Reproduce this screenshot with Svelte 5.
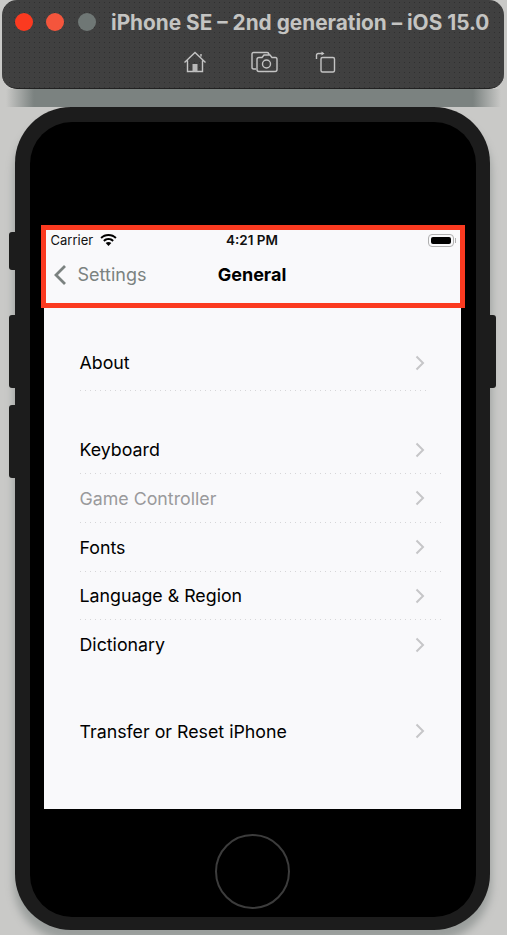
<script>
  const groups = [
    [{ label: 'About' }],
    [
      { label: 'Keyboard' },
      { label: 'Game Controller', disabled: true },
      { label: 'Fonts' },
      { label: 'Language & Region' },
      { label: 'Dictionary' }
    ],
    [{ label: 'Transfer or Reset iPhone' }]
  ];
</script>

<div class="page">
  <header class="toolbar">
    <div class="title-row">
      <span class="light red"></span>
      <span class="light red dim"></span>
      <span class="light grey"></span>
      <span class="title">iPhone SE – 2nd generation – iOS 15.0</span>
    </div>
    <div class="tools">
      <svg width="24" height="24" viewBox="0 0 24 24" fill="none" stroke="#c4c4c4" stroke-width="1.4">
        <path d="M1.5 12.5 12 2.5l10.500 10M4.500 10.500V21.500h15V10.500M18 6.500V4" />
        <rect x="9.500" y="14" width="5" height="7.500" fill="#b8b8b8" stroke="none" />
      </svg>
      <svg class="camera" width="27" height="22" viewBox="0 0 27 22" fill="none" stroke="#c4c4c4" stroke-width="1.4">
        <path d="M5 18H2.500Q1 18 1 16.500V3Q1 1.500 2.500 1.500H16Q18 1.500 18 4" />
        <path d="M6 8.500Q6 6.500 8 6.500h3l2-2.500h6l2 2.500h3.500q1.500 0 1.500 2v10q0 2-2 2H8q-2 0-2-2z" />
        <circle cx="15.500" cy="13" r="4" />
      </svg>
      <svg class="rotate" width="21" height="22" viewBox="0 0 21 22" fill="none" stroke="#c4c4c4" stroke-width="1.4">
        <rect x="6" y="6.500" width="13.500" height="14.500" rx="1.500" />
        <path d="M1.500 8V4.500Q1.500 2.500 3.500 2.500H7" />
        <path d="M6.500 0.500 9.500 2.500 6.500 4.500z" fill="#c4c4c4" stroke="none" />
      </svg>
    </div>
  </header>

  <div class="band"></div>

  <div class="phone">
    <span class="side-btn mute"></span>
    <span class="side-btn vol-up"></span>
    <span class="side-btn vol-down"></span>
    <span class="side-btn power"></span>

    <div class="bezel">
      <div class="screen">
        <div class="status-bar">
          <div class="carrier">
            <span>Carrier</span>
            <svg width="17" height="12" viewBox="0 0 17 12">
              <path d="M8.500 0C5.300 0 2.500 1.200.4 3.300l1.400 1.500C3.500 3 5.900 2 8.500 2s5 1 6.700 2.800l1.400-1.500C14.500 1.200 11.700 0 8.500 0z" />
              <path d="M8.500 4C6.400 4 4.600 4.800 3.200 6.200l1.400 1.500C5.600 6.700 7 6.100 8.500 6.100s2.900.6 3.900 1.600l1.400-1.500C12.400 4.800 10.600 4 8.500 4z" />
              <path d="M8.500 8c-1.100 0-2 .4-2.800 1.100l2.800 2.900 2.800-2.900C10.500 8.400 9.600 8 8.500 8z" />
            </svg>
          </div>
          <span class="clock">4:21 PM</span>
          <div class="battery"><span class="charge"></span></div>
        </div>

        <nav class="nav-bar">
          <div class="back">
            <svg width="14" height="22" viewBox="0 0 14 22" fill="none" stroke="#7b8280" stroke-width="2.800">
              <path d="M12 2 3 11l9 9" />
            </svg>
            <span>Settings</span>
          </div>
          <span class="nav-title">General</span>
        </nav>

        <div class="list">
          {#each groups as group}
            <ul class="group">
              {#each group as row}
                <li class="row" class:disabled={row.disabled}>
                  <span class="row-label">{row.label}</span>
                  <svg width="10" height="16" viewBox="0 0 10 16" fill="none" stroke="#c6c6c8" stroke-width="2">
                    <path d="M1.500 1.500 8 8l-6.500 6.500" />
                  </svg>
                </li>
              {/each}
            </ul>
          {/each}
        </div>

        <div class="highlight"></div>
      </div>

      <div class="home-button"></div>
    </div>
  </div>
</div>

<style>
  :global(body) {
    margin: 0;
    background: #c9c9c7;
  }

  .page {
    width: 507px;
    height: 935px;
    overflow: hidden;
    font-family: Inter, "Liberation Sans", sans-serif;
    background: #c9c9c7;
  }

  .toolbar {
    box-sizing: border-box;
    width: 502px;
    height: 89px;
    margin-left: 2px;
    padding: 13px 0 0 13px;
    background-color: #404040;
    background-image: radial-gradient(circle, #303030 0.5px, transparent 0.8px);
    background-size: 5px 5px;
    border-radius: 15px;
    border-bottom: 1px solid #222;
  }

  .band {
    height: 18px;
    background: linear-gradient(to right, #c9c9c7 6px, #7b8280 34px, #7b8280 473px, #c9c9c7 501px);
  }

  .title-row {
    display: flex;
    align-items: center;
    height: 18px;
  }

  .light {
    width: 18px;
    height: 18px;
    margin-right: 13px;
    border-radius: 50%;
  }

  .red {
    background: #fb3a20;
  }

  .red.dim {
    background: #f4553c;
    margin-right: 14px;
  }

  .grey {
    background: #6f7775;
    margin-right: 14px;
  }

  .title {
    margin-left: 1px;
    color: #c4c4c2;
    font-size: 20.800px;
    font-weight: 700;
    white-space: nowrap;
  }

  .tools {
    display: flex;
    align-items: center;
    gap: 29px;
    margin: 19px 0 0 168px;
  }

  .camera {
    margin-left: 15px;
  }

  .rotate {
    margin-left: 8px;
    margin-top: -1px;
  }

  .phone {
    position: relative;
    box-sizing: border-box;
    width: 475px;
    height: 823px;
    margin-left: 15px;
    padding: 15px 14px 13px 15px;
    background: #1c1c1c;
    border-radius: 56px;
    box-shadow: 0 10px 8px 1px #9a9e9c;
  }

  .side-btn {
    position: absolute;
    width: 6px;
    background: #1c1c1c;
    border-radius: 3px 0 0 3px;
  }

  .mute {
    left: -6px;
    top: 125px;
    height: 38px;
  }

  .vol-up {
    left: -6px;
    top: 208px;
    height: 73px;
  }

  .vol-down {
    left: -6px;
    top: 298px;
    height: 73px;
  }

  .power {
    right: -6px;
    top: 208px;
    height: 73px;
    border-radius: 0 3px 3px 0;
  }

  .bezel {
    box-sizing: border-box;
    display: flex;
    flex-direction: column;
    align-items: center;
    height: 100%;
    padding: 104px 2px 0 0;
    background: #000;
    border-radius: 42px;
  }

  .screen {
    position: relative;
    width: 417px;
    height: 583px;
    background: #f9f9fb;
    flex: none;
  }

  .status-bar {
    position: relative;
    display: flex;
    align-items: center;
    justify-content: space-between;
    height: 28px;
    padding: 0 7px;
    color: #111;
  }

  .carrier {
    display: flex;
    align-items: center;
    gap: 7px;
    font-size: 13px;
  }

  .clock {
    position: absolute;
    left: 0;
    right: 0;
    text-align: center;
    font-size: 13.500px;
    font-weight: 600;
  }

  .battery {
    position: relative;
    box-sizing: border-box;
    width: 26px;
    height: 13px;
    padding: 2px;
    border: 1px solid #b0b0b0;
    border-radius: 4px;
  }

  .battery::after {
    content: "";
    position: absolute;
    right: -3px;
    top: 3px;
    width: 1px;
    height: 5px;
    background: #b0b0b0;
  }

  .charge {
    display: block;
    height: 100%;
    background: #000;
    border-radius: 2px;
  }

  .nav-bar {
    position: relative;
    display: flex;
    align-items: center;
    height: 41px;
    padding-left: 9px;
  }

  .back {
    display: flex;
    align-items: center;
    gap: 11px;
    color: #7b8280;
    font-size: 18px;
  }

  .nav-title {
    position: absolute;
    left: 0;
    right: 0;
    text-align: center;
    font-size: 18px;
    font-weight: 700;
    color: #000;
  }

  .list {
    padding-top: 43.500px;
  }

  .group {
    list-style: none;
    margin: 0 0 38px;
    padding: 0;
  }

  .group:first-child {
    margin-bottom: 34px;
  }

  .group:first-child::after {
    content: "";
    display: block;
    height: 1px;
    width: 346px;
    margin: 3px 0 0 36px;
    background: linear-gradient(to right, #d6d6d8 1px, transparent 1px) 0 0 / 5px 1px repeat-x;
  }

  .row {
    display: flex;
    align-items: center;
    justify-content: space-between;
    box-sizing: border-box;
    height: 48.750px;
    margin: 0 20px 0 36px;
    padding-right: 16px;
    background: linear-gradient(to right, #d6d6d8 1px, transparent 1px) 0 100% / 5px 1px repeat-x;
    color: #000;
    font-size: 17.800px;
  }

  .row:last-child {
    background: none;
  }

  .disabled {
    color: #9a9a9c;
  }

  .highlight {
    position: absolute;
    left: -3px;
    top: -1px;
    right: -4px;
    height: 83px;
    box-sizing: border-box;
    border: 5px solid #fb3a20;
    pointer-events: none;
  }

  .home-button {
    box-sizing: border-box;
    width: 75px;
    height: 75px;
    margin-top: 25px;
    border: 2px solid #3c3c3c;
    border-radius: 50%;
  }
</style>
